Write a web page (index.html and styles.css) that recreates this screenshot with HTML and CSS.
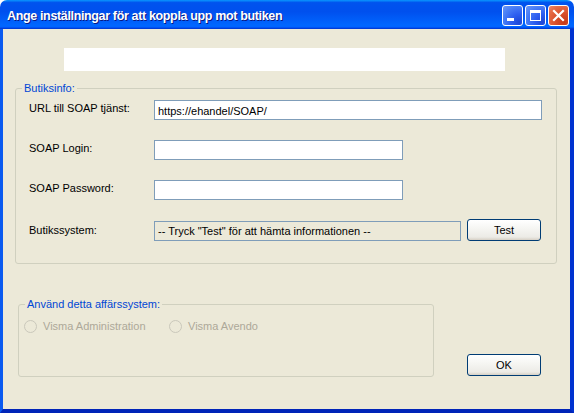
FILE: index.html
```html
<!DOCTYPE html>
<html lang="sv">
<head>
<meta charset="utf-8">
<title>Ange inställningar</title>
<link rel="stylesheet" href="styles.css">
</head>
<body>
<div class="window">
  <div class="titlebar">
    <span class="title">Ange inställningar för att koppla upp mot butiken</span>
    <div class="controls">
      <span class="tbtn"><svg width="19" height="19" viewBox="0 0 19 19"><rect x="4" y="12" width="7" height="3" fill="#fff"/></svg></span>
      <span class="tbtn"><svg width="19" height="19" viewBox="0 0 19 19"><rect x="4.5" y="4.5" width="10" height="10" fill="none" stroke="#fff" stroke-width="1"/><rect x="4" y="4" width="11" height="3" fill="#fff"/></svg></span>
      <span class="tbtn close"><svg width="19" height="19" viewBox="0 0 19 19"><path d="M5 5 L14 14 M14 5 L5 14" stroke="#fff" stroke-width="2.2" stroke-linecap="square"/></svg></span>
    </div>
  </div>
  <div class="client">
    <div class="banner"></div>
    <div class="group g1">
      <div class="group-title">Butiksinfo:</div>
      <div class="form">
        <label class="lbl">URL till SOAP tjänst:</label>
        <input class="txt url" type="text" value="https://ehandel/SOAP/">
        <label class="lbl">SOAP Login:</label>
        <input class="txt short" type="text" value="">
        <label class="lbl">SOAP Password:</label>
        <input class="txt short" type="password" value="">
        <div class="lbl sys-lbl">Butikssystem:</div>
        <div class="sysrow">
          <div class="readonly">-- Tryck "Test" för att hämta informationen --</div>
          <button class="btn">Test</button>
        </div>
      </div>
    </div>
    <div class="bottom">
      <div class="group g2">
        <div class="group-title">Använd detta affärssystem:</div>
        <div class="radios">
          <span class="radio first"><span class="circle"></span>Visma Administration</span>
          <span class="radio"><span class="circle"></span>Visma Avendo</span>
        </div>
      </div>
      <button class="btn ok">OK</button>
    </div>
  </div>
</div>
</body>
</html>
```
FILE: styles.css
```css
* { box-sizing: border-box; }
html, body { margin: 0; padding: 0; background: #fff; }
body { font-family: "Liberation Sans", Arial, sans-serif; font-size: 11px; color: #000; }

.window {
  width: 574px;
  height: 413px;
  display: flex;
  flex-direction: column;
}

.titlebar {
  height: 29px;
  flex: none;
  display: flex;
  align-items: flex-start;
  justify-content: space-between;
  border-radius: 7px 7px 0 0;
  background: linear-gradient(#0997ff 0%, #0053ee 9%, #0050ee 40%, #0066ff 86%, #0066ff 91%, #005bff 94%, #003dd7 97%, #003dd7 100%);
  padding: 0 5px 0 7px;
}
.title {
  color: #fff;
  font-family: "Liberation Sans", Arial, sans-serif;
  font-weight: bold;
  font-size: 12.5px;
  letter-spacing: -0.35px;
  line-height: 14px;
  margin-top: 9px;
  text-shadow: 1px 1px 0 #0a1883;
}
.controls {
  display: flex;
  gap: 2px;
  margin-top: 5px;
}
.tbtn {
  width: 21px;
  height: 21px;
  border: 1px solid #fff;
  border-radius: 3px;
  background: radial-gradient(circle at 85% 85%, #1e47d6 0%, #2d5ef0 35%, #4a7ff6 70%, #6b98f8 100%);
  display: flex;
  align-items: center;
  justify-content: center;
}
.tbtn.close {
  background: radial-gradient(circle at 80% 85%, #c4391a 0%, #d8502c 40%, #e66b46 75%, #f08a6b 100%);
}
.tbtn svg { display: block; }

.client {
  flex: 1;
  background: #ece9d8;
  border-left: 3px solid #0a5af0;
  border-right: 4px solid #0032d0;
  border-bottom: 4px solid #0024b8;
  display: flex;
  flex-direction: column;
}

.banner {
  width: 441px;
  height: 23px;
  background: #fff;
  margin: 19px 0 0 61px;
}

.group {
  border: 1px solid #d0d0bf;
  border-radius: 3px;
}
.group-title {
  color: #0046d5;
  line-height: 13px;
  width: fit-content;
  padding: 0 2px;
  margin: -7px 0 0 6px;
  background: #ece9d8;
}

.g1 {
  width: 542px;
  margin: 17px 0 0 12px;
  padding: 0 0 22px 0;
}
.form {
  margin: 5px 0 0 13px;
  display: grid;
  grid-template-columns: 125px auto;
  row-gap: 20px;
  align-items: start;
}
.lbl {
  line-height: 13px;
  padding-top: 2px;
}
.sys-lbl { margin-top: -1px; padding-top: 5px; }

.txt {
  height: 20px;
  border: 1px solid #7f9db9;
  background: #fff;
  font-family: "Liberation Sans", Arial, sans-serif;
  font-size: 11px;
  padding: 2px 2px 0 3px;
  margin: 0;
  outline: none;
}
.url { width: 388px; }
.short { width: 249px; }

.sysrow {
  display: flex;
  align-items: flex-end;
  gap: 6px;
  margin-top: -1px;
}
.readonly {
  width: 307px;
  height: 20px;
  border: 1px solid #7f9db9;
  padding: 2px 0 0 3px;
  line-height: 14px;
  white-space: nowrap;
}

.btn {
  width: 74px;
  height: 22px;
  border: 1px solid #003c74;
  border-radius: 3px;
  background: linear-gradient(#ffffff 0%, #f6f6f3 40%, #ecebe6 85%, #d6d0c5 100%);
  font-family: "Liberation Sans", Arial, sans-serif;
  font-size: 11px;
  color: #000;
  padding: 0;
  margin: 0;
}

.bottom {
  display: flex;
  align-items: flex-end;
  margin-top: 40px;
}
.g2 {
  width: 416px;
  height: 73px;
  margin-left: 15px;
}
.radios {
  display: flex;
  align-items: center;
  padding: 9px 0 0 5px;
  color: #aca899;
  line-height: 13px;
}
.radio {
  display: flex;
  align-items: center;
  gap: 6px;
}
.radio.first { width: 145px; }
.circle {
  width: 13px;
  height: 13px;
  border: 1px solid #cac8bb;
  border-radius: 50%;
  background: #ece9d8;
}
.ok {
  margin: 0 0 1px 33px;
}
```
